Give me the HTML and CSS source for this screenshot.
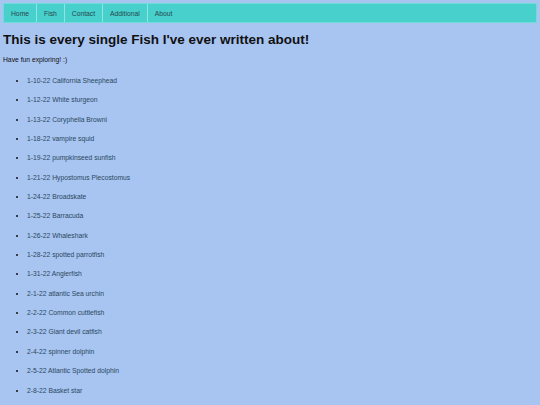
FILE: index.html
```html
<!DOCTYPE html>
<html>
<head>
<meta charset="utf-8">
<link rel="stylesheet" href="styles.css">
</head>
<body>
<nav class="topnav">
  <a class="nav-item" href="#">Home</a>
  <a class="nav-item" href="#">Fish</a>
  <a class="nav-item" href="#">Contact</a>
  <a class="nav-item" href="#">Additional</a>
  <a class="nav-item last" href="#">About</a>
</nav>
<h1 class="title">This is every single Fish I've ever written about!</h1>
<p class="intro">Have fun exploring! :)</p>
<ul class="fish-list">
  <li><a href="#">1-10-22 California Sheephead</a></li>
  <li><a href="#">1-12-22 White sturgeon</a></li>
  <li><a href="#">1-13-22 Coryphella Browni</a></li>
  <li><a href="#">1-18-22 vampire squid</a></li>
  <li><a href="#">1-19-22 pumpkinseed sunfish</a></li>
  <li><a href="#">1-21-22 Hypostomus Plecostomus</a></li>
  <li><a href="#">1-24-22 Broadskate</a></li>
  <li><a href="#">1-25-22 Barracuda</a></li>
  <li><a href="#">1-26-22 Whaleshark</a></li>
  <li><a href="#">1-28-22 spotted parrotfish</a></li>
  <li><a href="#">1-31-22 Anglerfish</a></li>
  <li><a href="#">2-1-22 atlantic Sea urchin</a></li>
  <li><a href="#">2-2-22 Common cuttlefish</a></li>
  <li><a href="#">2-3-22 Giant devil catfish</a></li>
  <li><a href="#">2-4-22 spinner dolphin</a></li>
  <li><a href="#">2-5-22 Atlantic Spotted dolphin</a></li>
  <li><a href="#">2-8-22 Basket star</a></li>
</ul>
</body>
</html>
```
FILE: styles.css
```css
html, body {
  background: #a8c4f1;
}
body {
  margin: 3px;
  font-family: "Liberation Sans", Arial, sans-serif;
  font-size: 6.75px;
  color: #111;
}
.topnav {
  display: flex;
  height: 20px;
  background: #48d1cc;
  border: 1px solid #6fdcd8;
  box-sizing: border-box;
}
.nav-item {
  display: flex;
  align-items: center;
  padding: 0 7px;
  color: #26464f;
  text-decoration: none;
  font-size: 6.75px;
  border-right: 1px solid #8ee6e2;
}
.nav-item.last {
  border-right: none;
}
.title {
  font-size: 13.5px;
  font-weight: bold;
  margin: 9px 0;
  color: #111;
}
.intro {
  margin: 7.5px 0 6.75px;
  color: #111;
}
.fish-list {
  margin: 8px 0;
  padding-left: 24px;
}
.fish-list li {
  padding: 5.8px 0;
  line-height: 7.76px;
}
.fish-list a {
  color: #2a4860;
  text-decoration: none;
}
```
